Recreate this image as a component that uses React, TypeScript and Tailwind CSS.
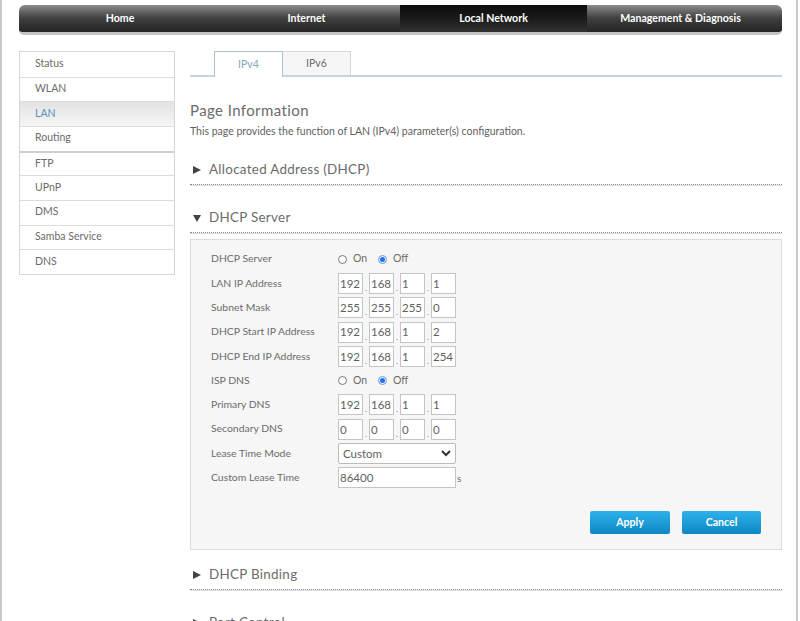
import React from 'react';

const topNav = [
  { label: 'Home', width: 'w-[194px] pl-[8px]', active: false },
  { label: 'Internet', width: 'w-[187px]', active: false },
  { label: 'Local Network', width: 'w-[187px]', active: true },
  { label: 'Management & Diagnosis', width: 'w-[195px] pr-[8px]', active: false },
];

const sideNav = ['Status', 'WLAN', 'LAN', 'Routing', 'FTP', 'UPnP', 'DMS', 'Samba Service', 'DNS'];

const SectionTitle = ({ title, open, className }: { title: string; open?: boolean; className?: string }) => (
  <div className={`flex h-[26px] items-center border-b border-dotted border-[#888] shadow-[0_1px_0_#ddd] pb-[4px] ${className || ''}`}>
    <svg width="8" height="8" viewBox="0 0 8 8" className="ml-[3px] mr-[8px] shrink-0 fill-[#444]">
      {open ? <path d="M0 1h8L4 8z" /> : <path d="M0 0l8 4-8 4z" />}
    </svg>
    <span className="text-[13.4px] tracking-[0.3px] text-[#6b6b6b]">{title}</span>
  </div>
);

const Radio = ({ checked, label }: { checked?: boolean; label: string }) => (
  <div className="flex w-[40px] items-center">
    {checked ? (
      <span className="flex h-[9px] w-[9px] items-center justify-center rounded-full border border-[#5a9bef]">
        <span className="h-[5px] w-[5px] rounded-full bg-[#1a73e8]" />
      </span>
    ) : (
      <span className="h-[9px] w-[9px] rounded-full border border-[#777] bg-white" />
    )}
    <span className="ml-[6px] text-[10.5px] text-[#6b6b6b]">{label}</span>
  </div>
);

const RadioPair = () => (
  <div className="flex">
    <Radio label="On" />
    <Radio checked label="Off" />
  </div>
);

const Box = ({ value, className }: { value: string; className?: string }) => (
  <div className={`flex h-[21px] items-center border border-[#c4c4c4] bg-white pl-[1px] text-[11.5px] text-[#5f5f5f] ${className || ''}`}>{value}</div>
);

const IpField = ({ parts }: { parts: string[] }) => (
  <div className="flex items-center">
    {parts.map((p, i) => (
      <React.Fragment key={i}>
        {i > 0 && <span className="flex h-[21px] w-[6px] items-end justify-center pb-[2px] text-[8px] leading-none text-[#777]">.</span>}
        <Box value={p} className="w-[25px]" />
      </React.Fragment>
    ))}
  </div>
);

const FormRow = ({ label, children }: { label: string; children: React.ReactNode }) => (
  <div className="flex h-[24.3px] items-center">
    <div className="w-[127px] text-[10.4px] text-[#6b6b6b]">{label}</div>
    {children}
  </div>
);

export default function App() {
  return (
    <div className="h-[621px] w-[800px] overflow-hidden bg-white font-['Lato','Open_Sans',sans-serif]">
      <div className="h-full w-[798px] border-x-2 border-[#c8c8c8] pl-[17px]">
        {/* top menu */}
        <div className="pt-[5px]">
          <div className="flex h-[30px] w-[763px] overflow-hidden rounded-t-[6px] rounded-b-[5px] border-b-[3px] border-[#c4c4c4]">
            {topNav.map((item) => (
              <div
                key={item.label}
                className={`flex items-center justify-center text-[10.6px] font-bold text-white ${item.width} ${
                  item.active
                    ? 'bg-gradient-to-b from-[#0d0d0d] via-[#1a1a1a] to-[#333]'
                    : 'bg-gradient-to-b from-[#8c8c8c] via-[#3f3f3f] to-[#252525]'
                }`}
              >
                {item.label}
              </div>
            ))}
          </div>
        </div>

        <div className="mt-[16px] flex">
          {/* side menu */}
          <div className="w-[156px] shrink-0 self-start border border-[#d6d6d6]">
            {sideNav.map((name, i) => (
              <div
                key={name}
                className={`flex h-[24.67px] items-center pb-[1px] pl-[15px] text-[10.5px] ${i > 0 ? 'border-t border-[#dcdcdc]' : ''} ${
                  name === 'LAN' ? 'bg-gradient-to-b from-[#e2e2e2] to-[#f6f6f6] text-[#5b93b8]' : 'text-[#6b6b6b]'
                } ${name === 'FTP' ? 'border-t-2 border-t-[#cfcfcf]' : ''}`}
              >
                {name}
              </div>
            ))}
          </div>

          {/* main column */}
          <div className="ml-[15px] w-[592px]">
            <div className="flex h-[26px] border-b-2 border-[#c3d3df] pl-[24px]">
              <div className="z-10 flex h-[26px] w-[69px] items-center justify-center border-x border-t border-[#a9c3d6] bg-white text-[10.5px] text-[#7fa6c2]">IPv4</div>
              <div className="flex h-[24px] w-[68px] items-center justify-center border-r border-t border-[#d8d8d8] bg-[#f6f6f6] text-[10.5px] text-[#6b6b6b]">IPv6</div>
            </div>

            <div className="mt-[23px] text-[15px] leading-[20px] tracking-[0.4px] text-[#6b6b6b]">Page Information</div>
            <div className="mt-[4px] text-[10.5px] leading-[14px] text-[#5f5f5f]">This page provides the function of LAN (IPv4) parameter(s) configuration.</div>

            <SectionTitle title="Allocated Address (DHCP)" className="mt-[21px]" />
            <SectionTitle title="DHCP Server" open className="mt-[22px]" />

            <div className="mt-[6px] h-[311px] border border-[#dcdcdc] bg-[#f6f6f6] pl-[20px] pt-[7px]">
              <FormRow label="DHCP Server"><RadioPair /></FormRow>
              <FormRow label="LAN IP Address"><IpField parts={['192', '168', '1', '1']} /></FormRow>
              <FormRow label="Subnet Mask"><IpField parts={['255', '255', '255', '0']} /></FormRow>
              <FormRow label="DHCP Start IP Address"><IpField parts={['192', '168', '1', '2']} /></FormRow>
              <FormRow label="DHCP End IP Address"><IpField parts={['192', '168', '1', '254']} /></FormRow>
              <FormRow label="ISP DNS"><RadioPair /></FormRow>
              <FormRow label="Primary DNS"><IpField parts={['192', '168', '1', '1']} /></FormRow>
              <FormRow label="Secondary DNS"><IpField parts={['0', '0', '0', '0']} /></FormRow>
              <FormRow label="Lease Time Mode">
                <div className="flex h-[21px] w-[118px] items-center justify-between rounded-[2px] border border-[#bbb] bg-white pl-[4px] pr-[4px] text-[11.5px] text-[#5f5f5f]">
                  <span>Custom</span>
                  <svg width="10" height="7" viewBox="0 0 10 7" fill="none" stroke="#333" strokeWidth="2"><path d="M1 1l4 4 4-4" /></svg>
                </div>
              </FormRow>
              <FormRow label="Custom Lease Time">
                <Box value="86400" className="w-[118px]" />
                <span className="ml-[1px] self-end pb-[4px] text-[10px] text-[#6b6b6b]">s</span>
              </FormRow>
              <div className="mt-[21px] flex justify-end gap-[12px] pr-[20px]">
                <div className="flex h-[23px] w-[80px] items-center justify-center rounded-[2px] bg-gradient-to-b from-[#2db2ea] to-[#0d87c4] text-[10.6px] font-bold text-white">Apply</div>
                <div className="flex h-[23px] w-[79px] items-center justify-center rounded-[2px] bg-gradient-to-b from-[#2db2ea] to-[#0d87c4] text-[10.6px] font-bold text-white">Cancel</div>
              </div>
            </div>

            <SectionTitle title="DHCP Binding" className="mt-[14px]" />
            <SectionTitle title="Port Control" className="mt-[22px]" />
          </div>
        </div>
      </div>
    </div>
  );
}
